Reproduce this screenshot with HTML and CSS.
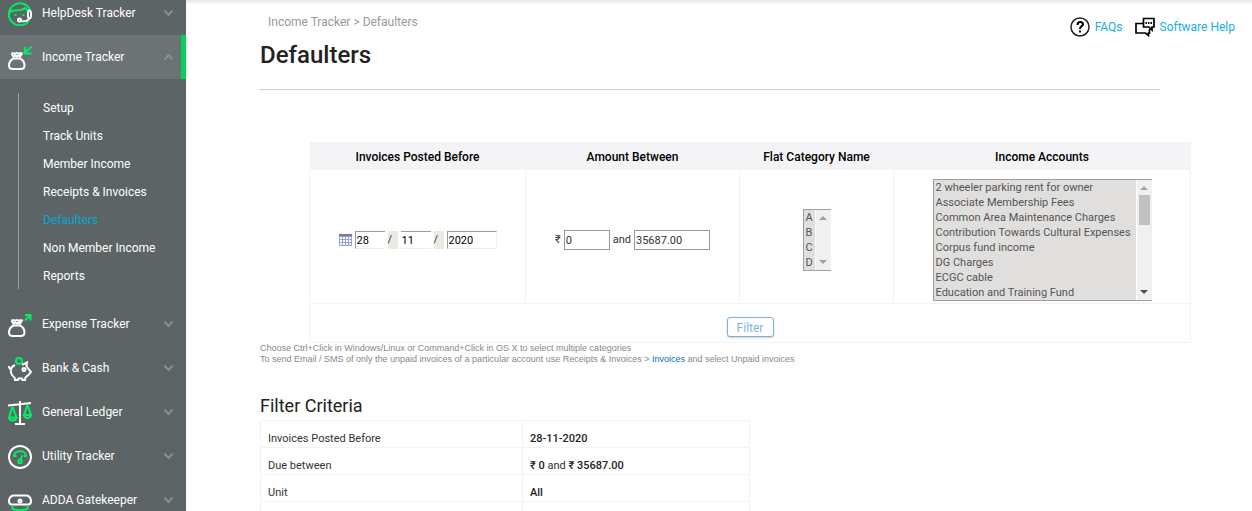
FILE: index.html
```html
<!DOCTYPE html>
<html lang="en">

<head>
    <meta charset="UTF-8">
    <meta name="viewport" content="width=device-width, initial-scale=1.0">
    <title>Defaulters</title>
    <link rel="stylesheet" href="styles.css">
</head>

<body>
    <div class="page">
        <nav class="sidebar">
            <ul class="menu">
                <li>
                    <a class="menu-item" href="#">
                        <svg class="menu-icon" viewBox="0 0 24 24">
                            <path class="green" d="M21 18.500A11 11 0 1 1 22 8M1.500 11.500C2.500 9 3.500 8.500 6 8.500c5 0 9-.5 11-2.500 1 1.500 2 2.500 4 3M7.500 12v2M15.500 12v2" />
                            <path class="white" d="M21.500 8.500c2.200 0 2.200 8 0 8s-2.200-8 0-8zM21 17c-1.500 2-5 2.500-8 2" />
                            <circle class="white" cx="11.500" cy="18" r="1.500" />
                        </svg>
                        <span>HelpDesk Tracker</span>
                        <svg class="chevron" viewBox="0 0 9 6"><path d="M.5.5l4 4.500 4-4.500" /></svg>
                    </a>
                </li>
                <li>
                    <a class="menu-item active" href="#">
                        <svg class="menu-icon" viewBox="0 0 24 24">
                            <path class="green" d="M23.500.5l-6 6M17 1v6.500h6.500" />
                            <path class="white" d="M5.500 12.500C2.500 14 1 16.500 1 19.500 1 22 2.500 23 5 23h7.500c2.500 0 4-1 4-3.500 0-3-1.500-5.500-4.500-7zM5.500 12.500h6.500M3.500 7.500c2-1 3.500.8 5.200-.5 1.800 1.300 3.300-.5 5.300.5L11.500 11.500M3.500 7.500L6 11.500M6 9l3 1.500 3-1.500" />
                        </svg>
                        <span>Income Tracker</span>
                        <svg class="chevron" viewBox="0 0 9 6"><path d="M.5 5.500l4-4.500 4 4.500" /></svg>
                    </a>
                    <ul class="submenu">
                        <li><a href="#">Setup</a></li>
                        <li><a href="#">Track Units</a></li>
                        <li><a href="#">Member Income</a></li>
                        <li><a href="#">Receipts &amp; Invoices</a></li>
                        <li><a class="current" href="#">Defaulters</a></li>
                        <li><a href="#">Non Member Income</a></li>
                        <li><a href="#">Reports</a></li>
                    </ul>
                </li>
                <li>
                    <a class="menu-item" href="#">
                        <svg class="menu-icon" viewBox="0 0 24 24">
                            <path class="green" d="M17 7.500l6-6M17 2h5.500v5.500" />
                            <path class="white" d="M5.500 12.500C2.500 14 1 16.500 1 19.500 1 22 2.500 23 5 23h7.500c2.500 0 4-1 4-3.500 0-3-1.500-5.500-4.500-7zM5.500 12.500h6.500M3.500 7.500c2-1 3.500.8 5.200-.5 1.800 1.300 3.300-.5 5.300.5L11.500 11.500M3.500 7.500L6 11.500M6 9l3 1.500 3-1.500" />
                        </svg>
                        <span>Expense Tracker</span>
                        <svg class="chevron" viewBox="0 0 9 6"><path d="M.5.5l4 4.500 4-4.500" /></svg>
                    </a>
                </li>
                <li>
                    <a class="menu-item" href="#">
                        <svg class="menu-icon" viewBox="0 0 24 24">
                            <circle class="green" cx="11" cy="4" r="3" />
                            <path class="white" d="M7 8c-4 1.500-5 5-3.500 9 .6 1.500 1.500 2.500 3 3.500l.5 2.500h3l.5-1.500h3.500l.5 1.500h2.500l.5-2.500c1-1 2-2 3-2.500l2.500-3-2.500-3-2-3 .5-3.500-4 2H14M3.500 12.500C1.500 12 1 11 1 9" />
                            <circle class="white" cx="16" cy="12.500" r="1.500" />
                        </svg>
                        <span>Bank &amp; Cash</span>
                        <svg class="chevron" viewBox="0 0 9 6"><path d="M.5.5l4 4.500 4-4.500" /></svg>
                    </a>
                </li>
                <li>
                    <a class="menu-item" href="#">
                        <svg class="menu-icon" viewBox="0 0 24 24">
                            <path class="green" d="M4.500 6L1 16.500h7.500zM1 16.500c.5 4 7 4 7.500 0M19.500 4L16 14h7zM16 14c.5 4 6.500 4 7 0" />
                            <path class="white" d="M0 4.500L23 2M12 0v23M7 23h10" />
                        </svg>
                        <span>General Ledger</span>
                        <svg class="chevron" viewBox="0 0 9 6"><path d="M.5.5l4 4.500 4-4.500" /></svg>
                    </a>
                </li>
                <li>
                    <a class="menu-item" href="#">
                        <svg class="menu-icon" viewBox="0 0 24 24">
                            <circle class="white" cx="12" cy="12" r="11" />
                            <path class="green" d="M8.500 11H6c0-6.500 12-6.500 12 0h-2M12.500 15l2-5" />
                            <circle class="green" cx="12" cy="16.500" r="1.700" />
                        </svg>
                        <span>Utility Tracker</span>
                        <svg class="chevron" viewBox="0 0 9 6"><path d="M.5.5l4 4.500 4-4.500" /></svg>
                    </a>
                </li>
                <li>
                    <a class="menu-item" href="#">
                        <svg class="menu-icon" viewBox="0 0 24 24">
                            <path class="green" d="M4.500 17v3c4 1.500 11 1.500 15 0v-3" />
                            <path class="white" d="M5 6.500h14c2.500 1 4 3 4 5.500 0 2-1 3.500-3 3.500H4c-2 0-3-1.500-3-3.500 0-2.500 1.500-4.500 4-5.500z" />
                            <circle class="white" cx="12" cy="12" r="1.500" />
                        </svg>
                        <span>ADDA Gatekeeper</span>
                        <svg class="chevron" viewBox="0 0 9 6"><path d="M.5.5l4 4.500 4-4.500" /></svg>
                    </a>
                </li>
            </ul>
        </nav>

        <main class="content">
            <header class="top">
                <div>
                    <div class="breadcrumb">Income Tracker &gt; Defaulters</div>
                    <h1>Defaulters</h1>
                </div>
                <div class="help-links">
                    <a href="#">
                        <svg viewBox="0 0 20 20">
                            <circle cx="10" cy="10" r="9" />
                            <path class="thick" d="M7.500 8c0-4 5.500-3.500 5.500-.8 0 2-3 2-3 4.800M10 13.500v2" />
                        </svg>
                        FAQs
                    </a>
                    <a href="#">
                        <svg viewBox="0 0 20 20">
                            <path class="mid" d="M8.500 1.500h10.500v8.500h-2v3L14 10H8.500zM8.500 6.500H1v9.500h9.500l3 2.500V16h1v-4" />
                            <path class="thick" d="M10.500 6H12M13 6h1.500M15.500 6H17" />
                        </svg>
                        Software Help
                    </a>
                </div>
            </header>
            <hr>

            <form class="filter-form">
                <table class="filter-table">
                    <thead>
                        <tr>
                            <th class="col-date">Invoices Posted Before</th>
                            <th class="col-amount">Amount Between</th>
                            <th class="col-category">Flat Category Name</th>
                            <th>Income Accounts</th>
                        </tr>
                    </thead>
                    <tbody>
                        <tr class="fields">
                            <td>
                                <div class="date-group">
                                    <svg class="calendar" viewBox="0 0 13 12">
                                        <path fill="#8fa3e0" d="M0 0h13v12H0z" />
                                        <path fill="#777b90" d="M0 0h13v2H0z" />
                                        <path fill="#fff" d="M1 3h2v2H1zM4 3h2v2H4zM7 3h2v2H7zM10 3h2v2h-2zM1 6h2v2H1zM4 6h2v2H4zM7 6h2v2H7zM10 6h2v2h-2zM1 9h2v2H1zM4 9h2v2H4zM7 9h2v2H7zM10 9h2v2h-2z" />
                                    </svg>
                                    <input class="day" type="text" value="28" aria-label="Day">
                                    <span class="slash">/</span>
                                    <input class="day month" type="text" value="11" aria-label="Month">
                                    <span class="slash">/</span>
                                    <input class="year" type="text" value="2020" aria-label="Year">
                                </div>
                            </td>
                            <td>
                                <div class="amount-group">
                                    <label for="min">₹</label>
                                    <input class="min" id="min" type="text" value="0">
                                    <label for="max">and</label>
                                    <input class="max" id="max" type="text" value="35687.00">
                                </div>
                            </td>
                            <td>
                                <div class="list">
                                    <select multiple size="4" aria-label="Flat Category Name">
                                        <option>A</option>
                                        <option>B</option>
                                        <option>C</option>
                                        <option>D</option>
                                    </select>
                                    <div class="scroll">
                                        <i class="up"></i>
                                        <i class="down"></i>
                                    </div>
                                </div>
                            </td>
                            <td>
                                <div class="list accounts">
                                    <select multiple size="8" aria-label="Income Accounts">
                                        <option>2 wheeler parking rent for owner</option>
                                        <option>Associate Membership Fees</option>
                                        <option>Common Area Maintenance Charges</option>
                                        <option>Contribution Towards Cultural Expenses</option>
                                        <option>Corpus fund income</option>
                                        <option>DG Charges</option>
                                        <option>ECGC cable</option>
                                        <option>Education and Training Fund</option>
                                    </select>
                                    <div class="scroll">
                                        <i class="up"></i>
                                        <i class="thumb"></i>
                                        <i class="down dark"></i>
                                    </div>
                                </div>
                            </td>
                        </tr>
                        <tr class="actions">
                            <td colspan="4"><button type="button">Filter</button></td>
                        </tr>
                    </tbody>
                </table>
                <p class="hint">Choose Ctrl+Click in Windows/Linux or Command+Click in OS X to select multiple categories<br>
                    To send Email / SMS of only the unpaid invoices of a particular account use Receipts &amp; Invoices &gt; <a href="#">Invoices</a> and select Unpaid invoices</p>
            </form>

            <h2>Filter Criteria</h2>
            <table class="criteria">
                <tbody>
                    <tr>
                        <td>Invoices Posted Before</td>
                        <td><b>28-11-2020</b></td>
                    </tr>
                    <tr>
                        <td>Due between</td>
                        <td><b>₹ 0</b> and <b>₹ 35687.00</b></td>
                    </tr>
                    <tr>
                        <td>Unit</td>
                        <td><b>All</b></td>
                    </tr>
                    <tr>
                        <td></td>
                        <td></td>
                    </tr>
                </tbody>
            </table>
        </main>
    </div>
</body>

</html>
```
FILE: styles.css
```css
* {
    box-sizing: border-box;
}

body {
    margin: 0;
    font-family: Roboto, "Noto Sans", sans-serif;
    font-size: 11px;
    color: #333;
    background-color: #fff;
}

a {
    text-decoration: none;
}

ul {
    list-style: none;
    margin: 0;
    padding: 0;
}

.page {
    display: flex;
    height: 100vh;
    overflow: hidden;
}

/* sidebar */
.sidebar {
    flex: none;
    width: 186px;
    overflow: hidden;
    background-color: #5c6465;
}

.menu {
    margin-top: -9px;
}

.menu-item {
    display: flex;
    align-items: center;
    height: 44px;
    padding: 0 13px 0 8px;
    font-size: 12px;
    color: #fff;
}

.menu-item span {
    flex: 1;
    margin-left: 10px;
}

.menu-item.active {
    padding-right: 8px;
    background-color: #6b7375;
    border-right: 5px solid #00d356;
}

.menu-icon {
    width: 24px;
    height: 24px;
    margin-top: 2px;
    fill: none;
    stroke-width: 2;
}

.menu-icon .green {
    stroke: #00ee62;
}

.menu-icon .white {
    stroke: #fff;
}

.chevron {
    width: 9px;
    height: 6px;
    fill: none;
    stroke: #888f90;
    stroke-width: 2;
    overflow: visible;
}

.submenu {
    margin: 14px 0 13px 18px;
    padding-left: 24px;
    border-left: 1px solid #989d9e;
}

.submenu a {
    display: block;
    height: 28px;
    font-size: 12px;
    line-height: 30px;
    color: #fff;
}

.submenu .current {
    color: #0aa5d5;
}

/* main area */
.content {
    flex: 1;
    padding: 15px 17px 0 74px;
    background: linear-gradient(#e6e6e6, #fff 5px);
}

.top {
    display: flex;
    justify-content: space-between;
}

.breadcrumb {
    padding-left: 8px;
    font-size: 12px;
    line-height: 14px;
    color: #999;
}

h1 {
    margin: 10px 0 18px;
    font-size: 24px;
    line-height: 32px;
    font-weight: 500;
    color: #222;
}

.help-links {
    display: flex;
    gap: 12px;
    height: 24px;
}

.help-links a {
    display: flex;
    align-items: center;
    gap: 5px;
    font-size: 12px;
    color: #16b0dc;
}

.help-links svg {
    width: 20px;
    height: 20px;
    fill: none;
    stroke: #222;
    stroke-width: 1.5;
}

.help-links .mid {
    stroke: #000;
    stroke-width: 1.7;
}

.help-links .thick {
    stroke: #000;
    stroke-width: 2;
}

hr {
    max-width: 900px;
    margin: 0;
    border: 0;
    border-top: 1px solid #ccc;
}

/* filter form */
.filter-table {
    width: 100%;
    max-width: 882px;
    margin: 52px 0 0 49px;
    border-collapse: collapse;
    table-layout: fixed;
}

.filter-table th {
    height: 27px;
    padding: 3px 0 0;
    font-size: 12px;
    font-weight: 500;
    color: #000;
    background-color: #f4f4f6;
}

.filter-table td {
    padding: 0;
    border: 1px solid #f3f3f5;
    text-align: center;
}

.col-date {
    width: 216px;
}

.col-amount {
    width: 214px;
}

.col-category {
    width: 154px;
}

.fields td {
    height: 134px;
    padding-top: 7px;
}

.actions td {
    height: 39px;
    padding-top: 9px;
}

.date-group,
.amount-group {
    display: flex;
    justify-content: center;
    align-items: center;
    gap: 3px;
}

.date-group {
    gap: 3px;
}

.calendar {
    width: 13px;
    height: 12px;
}

input {
    padding: 2px 1px 1px;
    font-family: inherit;
    font-size: 11px;
    color: #333;
    border: 1px solid #999;
    border-radius: 0;
    background-color: #fff;
}

.date-group input {
    height: 18px;
    color: #000;
    border-color: #999 #eee #eee #999;
}

.date-group .day {
    width: 30px;
    border-right: 0;
}

.date-group .month {
    border-left: 0;
}

.date-group .year {
    width: 50px;
}

.slash {
    width: 10px;
    height: 18px;
    line-height: 18px;
    text-align: left;
    background-color: #ebebe4;
}

.amount-group label {
    line-height: 14px;
}

.amount-group input {
    height: 20px;
}

.amount-group .min {
    width: 46px;
}

.amount-group .max {
    width: 76px;
}

.list {
    display: inline-flex;
    vertical-align: middle;
    border: 1px solid #a0a0a0;
    border-right: 0;
}

.list select {
    width: 11px;
    padding: 0;
    font-family: inherit;
    font-size: 11px;
    border: 0;
    border-radius: 0;
    outline: 0;
    overflow: hidden;
    background-color: #e0dfdd;
}

.list.accounts select {
    width: 202px;
}

.list option {
    height: 15px;
    min-height: 15px;
    padding: 1px 0 0 2px;
    line-height: 15px;
    color: #555;
}

.scroll {
    display: flex;
    flex-direction: column;
    align-items: center;
    width: 16px;
    padding: 6px 0;
    background-color: #f0f0f0;
    border-left: 1px solid #fff;
}

.up,
.down {
    border: 4px solid transparent;
    border-top-width: 0;
    border-bottom-color: #a3a3a3;
}

.down {
    margin-top: auto;
    border-top: 4px solid #a3a3a3;
    border-bottom: 0;
}

.down.dark {
    border-top-color: #505050;
}

.thumb {
    width: 11px;
    height: 30px;
    margin-top: 5px;
    background-color: #c1c1c1;
}

button {
    width: 47px;
    height: 20px;
    padding: 1px 0 0;
    font-family: inherit;
    font-size: 12px;
    color: #7fb6dc;
    background-color: #fff;
    border: 1px solid #7ab3da;
    border-radius: 3px;
    box-shadow: 0 1px 2px rgba(0, 0, 0, 0.2);
}

.hint {
    margin: 0;
    font-family: "Liberation Sans", Arial, sans-serif;
    font-size: 9px;
    line-height: 11px;
    color: #888;
}

.hint a {
    color: #0a6ebd;
}

/* criteria */
h2 {
    margin: 30px 0 3px;
    font-size: 18px;
    line-height: 22px;
    font-weight: 400;
    color: #222;
}

.criteria {
    width: 100%;
    max-width: 490px;
    border-collapse: collapse;
    table-layout: fixed;
}

.criteria td {
    height: 27px;
    padding: 10px 7px 0;
    border: 1px solid #f3f3f3;
}

.criteria td:first-child {
    width: 262px;
}

.criteria b {
    font-weight: 500;
    color: #222;
}
```
